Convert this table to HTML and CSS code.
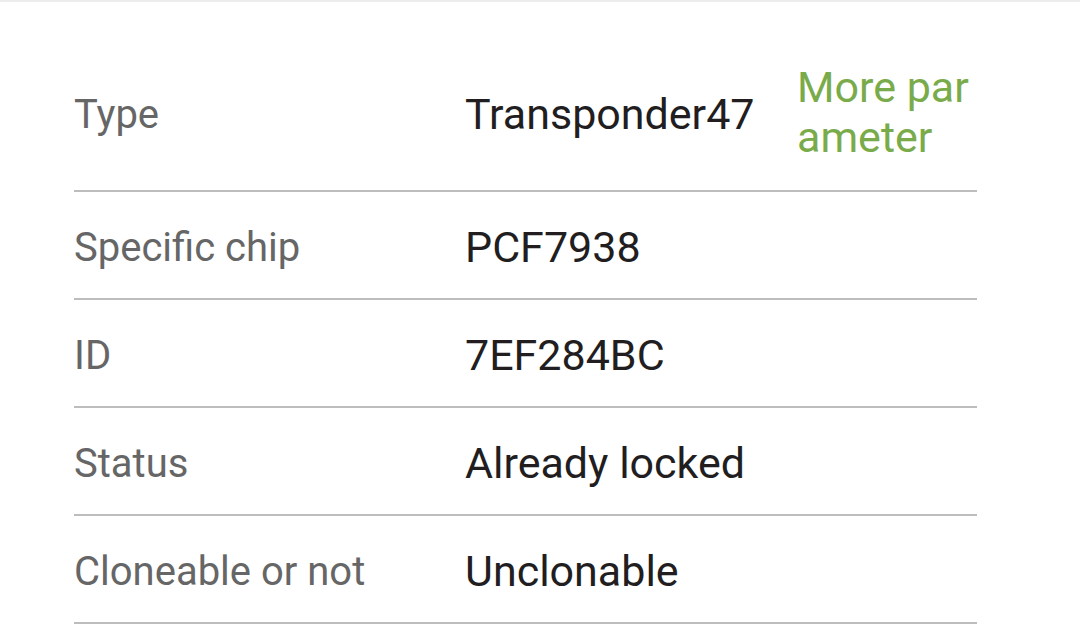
FILE: index.html
```html
<!DOCTYPE html>
<html>
<head>
<meta charset="utf-8">
<link rel="stylesheet" href="styles.css">
</head>
<body>
<div class="page">
  <div class="table">
    <div class="row first">
      <div class="label">Type</div>
      <div class="value">Transponder47</div>
      <div class="more">More parameter</div>
    </div>
    <div class="row">
      <div class="label">Specific chip</div>
      <div class="value">PCF7938</div>
    </div>
    <div class="row">
      <div class="label">ID</div>
      <div class="value">7EF284BC</div>
    </div>
    <div class="row">
      <div class="label">Status</div>
      <div class="value">Already locked</div>
    </div>
    <div class="row">
      <div class="label">Cloneable or not</div>
      <div class="value">Unclonable</div>
    </div>
  </div>
</div>
</body>
</html>
```

FILE: styles.css
```css
html, body {
  margin: 0;
  padding: 0;
  background: #ffffff;
}
body {
  font-family: Roboto, "Noto Sans", sans-serif;
}
.page {
  width: 1080px;
  height: 639px;
  border-top: 2px solid #ececec;
  box-sizing: border-box;
  overflow: hidden;
  padding-top: 32px;
}
.table {
  margin-left: 74px;
  width: 903px;
}
.row {
  display: flex;
  align-items: center;
  border-bottom: 2px solid #bdbdbd;
  height: 106px;
  line-height: 50px;
}
.row.first {
  height: 156px;
}
.label {
  width: 391px;
  color: #666666;
  font-size: 40px;
  padding-top: 5px;
  flex: none;
}
.value {
  color: #221e1f;
  font-size: 43px;
  padding-top: 3px;
  flex: none;
  width: 332px;
}
.more {
  color: #7aab4b;
  font-size: 43px;
  width: 180px;
  word-break: break-all;
  flex: none;
}
```
